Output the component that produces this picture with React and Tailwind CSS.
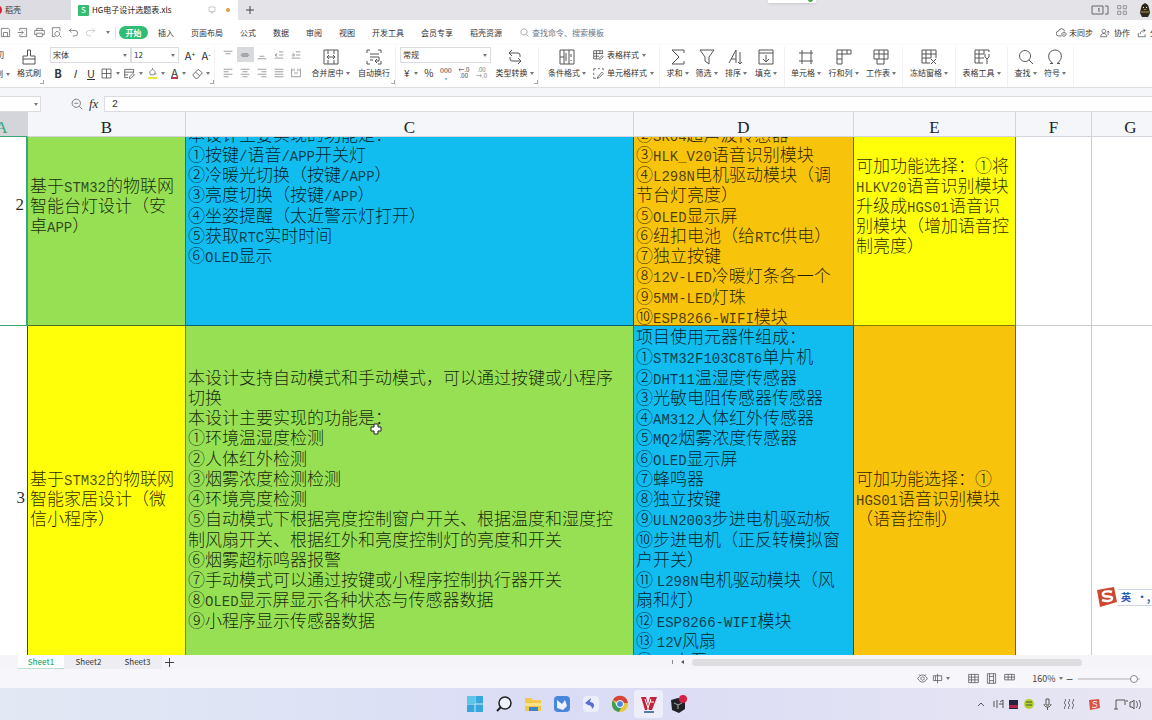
// src/App.jsx
import { Fragment } from "react";

const columns = [
  { name: "A", width: "w-[52px]" },
  { name: "B", width: "w-[158px]" },
  { name: "C", width: "w-[448px]" },
  { name: "D", width: "w-[220px]" },
  { name: "E", width: "w-[162px]" },
  { name: "F", width: "w-[76px]" },
  { name: "G", width: "w-[78px]" },
];

const rows = [
  {
    id: 2,
    height: "h-[240px]",
    selected: true,
    cells: [
      { bg: "bg-[#97e054]", lines: ["基于STM32的物联网", "智能台灯设计（安", "卓APP）"] },
      {
        bg: "bg-[#11bdef]",
        size: "h-[162px]",
        lines: [
          "本设计主要实现的功能是：",
          "①按键/语音/APP开关灯",
          "②冷暖光切换（按键/APP）",
          "③亮度切换（按键/APP）",
          "④坐姿提醒（太近警示灯打开）",
          "⑤获取RTC实时时间",
          "⑥OLED显示",
          "",
        ],
      },
      {
        bg: "bg-[#f8c40b]",
        size: "h-[243px] -my-[3px]",
        lines: [
          "项目使用元器件组成：",
          "①STM32F103C8T6单片机",
          "②SR04超声波传感器",
          "③HLK_V20语音识别模块",
          "④L298N电机驱动模块（调",
          "节台灯亮度）",
          "⑤OLED显示屏",
          "⑥纽扣电池（给RTC供电）",
          "⑦独立按键",
          "⑧12V-LED冷暖灯条各一个",
          "⑨5MM-LED灯珠",
          "⑩ESP8266-WIFI模块",
        ],
      },
      {
        bg: "bg-[#ffff0a]",
        lines: ["可加功能选择：①将", "HLKV20语音识别模块", "升级成HGS01语音识", "别模块（增加语音控", "制亮度）"],
      },
    ],
  },
  {
    id: 3,
    height: "h-[347px]",
    selected: false,
    cells: [
      { bg: "bg-[#ffff0a]", lines: ["基于STM32的物联网", "智能家居设计（微", "信小程序）"] },
      {
        bg: "bg-[#97e054]",
        size: "h-[263px]",
        lines: [
          "本设计支持自动模式和手动模式，可以通过按键或小程序",
          "切换",
          "本设计主要实现的功能是：",
          "①环境温湿度检测",
          "②人体红外检测",
          "③烟雾浓度检测检测",
          "④环境亮度检测",
          "⑤自动模式下根据亮度控制窗户开关、根据温度和湿度控",
          "制风扇开关、根据红外和亮度控制灯的亮度和开关",
          "⑥烟雾超标鸣器报警",
          "⑦手动模式可以通过按键或小程序控制执行器开关",
          "⑧OLED显示屏显示各种状态与传感器数据",
          "⑨小程序显示传感器数据",
        ],
      },
      {
        bg: "bg-[#11bdef]",
        size: "h-[344px]",
        lines: [
          "项目使用元器件组成：",
          "①STM32F103C8T6单片机",
          "②DHT11温湿度传感器",
          "③光敏电阻传感器传感器",
          "④AM312人体红外传感器",
          "⑤MQ2烟雾浓度传感器",
          "⑥OLED显示屏",
          "⑦蜂鸣器",
          "⑧独立按键",
          "⑨ULN2003步进电机驱动板",
          "⑩步进电机（正反转模拟窗",
          "户开关）",
          "⑪ L298N电机驱动模块（风",
          "扇和灯）",
          "⑫ ESP8266-WIFI模块",
          "⑬ 12V风扇",
          "⑭ 5V水泵",
        ],
      },
      { bg: "bg-[#f8c40b]", lines: ["可加功能选择：①", "HGS01语音识别模块", "（语音控制）"] },
    ],
  },
];

const icons = {
  save: "M2 2h10l2 2v10H2zM5 14V8h6v6",
  export: "M4 5V2h10v12H4v-3M1 8h8M6 5l3 3-3 3M11 5h1M11 11h1",
  print: "M4 5V2h8v3M4 11H1V5h14v6h-3M4 9h8v5H4z",
  preview: "M13 6V1H2v13h4M13 13l2 2M9 6.5a3.5 3.5 0 1 0 .1 0",
  undo: "M5 2L2 5l3 3M2 5h8a4 4 0 0 1 0 8H7",
  redo: "M11 2l3 3-3 3M14 5H6a4 4 0 0 0 0 8h3",
  search: "M7 1.5a5.5 5.5 0 1 0 .1 0M11 11l4 4",
  zoomOut: "M7 1.5a5.5 5.5 0 1 0 .1 0M11 11l4 4M4.5 7h5",
  cloud: "M8 13H4a3.5 3.5 0 0 1-.3-7A4.5 4.5 0 0 1 12.5 6M11.5 7.5a3 3 0 1 0 .1 0M10.5 10.5h2",
  person: "M6 2a3 3 0 1 0 .1 0M1 14c0-7 10-7 10 0zM13 5v6M11 7l2-2 2 2",
  share: "M2 8v6h11v-4M5 10c0-5 4-6 8-6M10 1l3 3-3 3",
  brush: "M6.5 1h3v6H14v8H2V7h4.5zM2 10h12",
  borders: "M1.5 1.5h13v13h-13zM8 1.5v13M1.5 8h13",
  tableDraw: "M6 14H1V2h13v5M1 6h13M6 10H1M8 13l5-5 2 2-5 5H8z",
  fill: "M3 7l5-5 5 5-2 5H4zM8 2V0M14 9v3",
  eraser: "M1 10l8-8 6 5-7 8H5zM5 6l6 5",
  mergeCells: "M1 1h14v14H1zM5 1v4M11 1v4M5 15v-4M11 15v-4M4 8h8M6 6L4 8l2 2M10 6l2 2-2 2",
  wrap: "M1 4V1h3M12 1h3v3M1 12v3h3M12 15h3v-3M4 5h9M4 8h9v4H9M11 10l-2 2 2 2M4 11h3",
  convert: "M5 1L2 4l3 3M2 4h9a2 2 0 0 1 2 2v2M11 15l3-3-3-3M14 12H5a2 2 0 0 1-2-2V8",
  condFormat: "M1 1h14v14H1zM5 1v14M10 1v14M7 4v8M12 5v3M12 11v1M1 8h4",
  tableStyle: "M7 13H1V1h13v5M1 5h13M5 1v12M10 1v5M1 9h8M8 13l5-5 2 2-5 4z",
  cellStyle: "M1 4V1h3M7 1h3M13 1h2v2M1 7v3M1 13v2h3M7 13l6-7 2 2-6 6-3 1z",
  sum: "M14 4V1H2l7 7-7 7h12v-3",
  filter: "M1 1h14L10 8v7l-4-3V8z",
  sort: "M1 14L8 1v13M3 10h5M12 3v12M10 13l2 2 2-2",
  fillDown: "M1 1h14v14H1zM1 4h14M8 6v7M5 10l3 3 3-3",
  cell: "M4 1v14M13 1v14M1 4h14M1 12h14",
  rowsCols: "M1 1h14v4H6v10H1zM6 1v4M11 1v4M1 5h5M1 10h5",
  worksheet: "M1 1h14v9H1zM6 1v9M11 1v9M1 5h14M4 10v5h7v-5",
  freeze: "M1 1h14v8M1 1v13h8M5 1v13M10 1v8M1 5h14M1 9h9M10 10l5 5M15 10l-5 5",
  tableTools: "M15 3V1H1v13h8M1 5h9M1 9h9M5 1v13M10 1v4M13 15V9M11 5v3l2 2 2-2V5",
  symbol: "M3 14.5h3C-1 10 1 1 8 1s9 9 2 13.5h3",
  top: "M1 2h14M4 6h8",
  middle: "M3 6h10M1 8h14M3 10h10",
  bottom: "M4 10h8M1 14h14",
  outdent: "M8 3h7M8 8h7M1 13h14M5 5L2 8l3 3M2 8h3",
  indent: "M8 3h7M8 8h7M1 13h14M3 5l3 3-3 3M1 8h4",
  left: "M1 2h14M1 6h8M1 10h14M1 14h8",
  center: "M1 2h14M4 6h8M1 10h14M4 14h8",
  right: "M1 2h14M7 6h8M1 10h14M7 14h8",
  justify: "M1 2h14M1 6h14M1 10h14M1 14h14",
  distribute: "M1 1v13h14V1M5 1v4M11 1v4M5 8h6M1 3h2M13 3h2",
  monitor: "M2 2h12v9H2zM5 14h6M8 11v3",
  eye: "M1 8c4-7 10-7 14 0-4 7-10 7-14 0zM8 5.5a2.5 2.5 0 1 0 .1 0M3 2l2 2M13 2l-2 2",
  readMode: "M2 4h12v7H2zM8 1v14M5 4v7",
  gridView: "M1 2h14v12H1zM1 6h14M1 10h14M5 2v12M10 2v12",
  pageView: "M2 1h12v14H2zM5 1v14M11 1v14M5 5h6M5 11h6",
  splitView: "M1 2h14v8H1zM6 2v8M11 2v8M1 6h14",
  apps: "M1 1h5v5H1zM10 1h5v5h-5zM1 10h5v5H1zM10 10h5v5h-5z",
};

function Icon({ name, className = "size-4" }) {
  return (
    <svg viewBox="0 0 16 16" className={`shrink-0 ${className}`} fill="none" stroke="currentColor" aria-hidden="true">
      <path d={icons[name]} />
    </svg>
  );
}

function Caret({ className = "" }) {
  return (
    <svg viewBox="0 0 4 3" className={`h-[3px] w-1 shrink-0 ${className}`} fill="#777" aria-hidden="true">
      <path d="M0 0h4L2 3z" />
    </svg>
  );
}

function TitleBar() {
  return (
    <header className="relative flex h-5 shrink-0 items-stretch bg-[#e3e3e8]">
      <button className="flex w-[71px] items-center gap-[3px] overflow-hidden bg-[#dcdce2]">
        <span className="-ml-2 size-[10px] rounded-full bg-[#d61f3a]"></span>
        <span>稻壳</span>
      </button>
      <div className="flex w-[167px] items-center bg-white pr-2 pl-[7px]">
        <span className="flex size-[11px] items-center justify-center rounded-[1px] bg-[#35bd74] text-[8px] text-white">S</span>
        <h1 className="ml-[3px] flex-1 whitespace-nowrap text-[#222]">HG电子设计选题表.xls</h1>
        <Icon name="monitor" className="size-2 text-[#999]" />
        <span className="ml-[10px] size-1 rounded-full bg-[#d9a13c]"></span>
      </div>
      <button aria-label="新建" className="w-6 text-[#444]">
        <svg viewBox="0 0 8 8" className="mx-auto size-2" stroke="currentColor">
          <path d="M4 0v8M0 4h8" />
        </svg>
      </button>
      <div className="ml-auto flex items-center gap-2 text-[#666]">
        <button aria-label="窗口">
          <svg viewBox="0 0 18 10" className="h-[10px] w-[18px]" fill="none" stroke="currentColor">
            <path d="M1 1h11v8H1zM14 1h3v8h-3M8 3v4M7 4h1" />
          </svg>
        </button>
        <button aria-label="应用">
          <Icon name="apps" className="size-[10px]" />
        </button>
        <svg viewBox="0 0 14 14" className="ml-[3px] size-[14px]" aria-label="头像">
          <path d="M2 10l1-5 1-3 3-2 3 2 1 3 1 5-2 4H4z" fill="#2c281b" />
          <path d="M5 4h1v1H5zM8 4h1v1H8z" fill="#eee" />
          <path d="M5 6h4L7 7z" fill="#d8a63a" />
          <path d="M3 8h8v2H3z" fill="#6f6234" />
        </svg>
      </div>
      {/* screen recorder handle peeking from the top edge */}
      <div className="absolute top-0 left-2/3 flex h-[3px] w-12 justify-end overflow-hidden bg-white pr-[3px] shadow">
        <span className="-mt-[3px] size-[5px] rounded-full bg-[#43a047]"></span>
      </div>
    </header>
  );
}

const menus = ["插入", "页面布局", "公式", "数据", "审阅", "视图", "开发工具", "会员专享", "稻壳资源"];

function MenuBar() {
  return (
    <nav className="flex h-[25px] shrink-0 items-center overflow-hidden bg-white whitespace-nowrap">
      <div className="flex items-center gap-[6px] text-[#555]">
        {["save", "export", "print", "preview", "undo"].map((name) => (
          <button key={name} aria-label={name}>
            <Icon name={name} className="size-[11px]" />
          </button>
        ))}
        <button aria-label="redo" className="text-[#bbb]">
          <Icon name="redo" className="size-[11px]" />
        </button>
        <button aria-label="更多" className="ml-1">
          <Caret />
        </button>
      </div>
      <span className="ml-[5px] h-3 w-px bg-[#ddd]"></span>
      <button className="ml-[3px] h-[13px] w-[29px] rounded-full bg-[#2fbd73] font-bold text-white">开始</button>
      <div className="ml-[10px] flex gap-[17px]">
        {menus.map((menu) => (
          <button key={menu}>{menu}</button>
        ))}
      </div>
      <label className="ml-[18px] flex items-center gap-[3px] text-[#666]">
        <Icon name="search" className="size-[9px]" />
        <input
          placeholder="查找命令、搜索模板"
          aria-label="查找命令、搜索模板"
          className="w-24 outline-none placeholder:text-[#6b7688]"
        />
      </label>
      <div className="ml-auto flex items-center">
        <button className="flex items-center gap-[2px]">
          <Icon name="cloud" className="size-[11px]" />
          未同步
        </button>
        <button className="ml-[7px] flex items-center gap-1">
          <Icon name="person" className="size-[10px]" />
          协作
        </button>
        <button className="ml-[7px] flex w-[15px] items-center gap-[3px] overflow-hidden">
          <Icon name="share" className="size-[10px]" />
          分享
        </button>
      </div>
    </nav>
  );
}

function BigButton({ icon, label, width, caret = true }) {
  return (
    <button className={`flex shrink-0 flex-col items-center gap-[2px] pt-[2px] ${width}`}>
      <Icon name={icon} className="size-4 text-[#555]" />
      <span className="flex items-center gap-[2px] whitespace-nowrap">
        {label}
        {caret && <Caret />}
      </span>
    </button>
  );
}

function Divider() {
  return <span className="w-px shrink-0 self-stretch bg-[#f0f0f2]"></span>;
}

// small corner mark that opens the settings of a group
function Launcher() {
  return (
    <button aria-label="更多设置" className="mb-[3px] -ml-1 size-1 shrink-0 self-end border-r border-b border-[#aaa]"></button>
  );
}

function Dropdown({ label, value, width }) {
  return (
    <label className={`relative flex h-4 items-center border border-[#dcdce0] bg-white ${width}`}>
      <select aria-label={label} className="w-full appearance-none pl-[2px] outline-none">
        <option>{value}</option>
      </select>
      <Caret className="absolute right-[3px]" />
    </label>
  );
}

function FontGroup() {
  return (
    <div className="ml-[6px] flex w-[164px] shrink-0 flex-col gap-[3px]">
      <div className="flex items-center">
        <Dropdown label="字体" value="宋体" width="w-[81px]" />
        <Dropdown label="字号" value="12" width="w-12" />
        <button aria-label="增大字号" className="ml-[5px] w-3 text-[11px]">
          A<sup className="text-[7px]">+</sup>
        </button>
        <button aria-label="减小字号" className="ml-1 w-3 text-[11px]">
          A<sup className="text-[7px]">-</sup>
        </button>
      </div>
      <div className="flex h-[14px] items-center text-[11px]">
        <button className="w-4 font-bold">B</button>
        <button className="w-[17px] italic">I</button>
        <button className="w-4 underline">U</button>
        <button aria-label="边框" className="flex w-[22px] items-center justify-center gap-1">
          <Icon name="borders" className="size-[11px]" />
          <Caret />
        </button>
        <button aria-label="绘图边框" className="flex w-[24px] items-center justify-center gap-1">
          <Icon name="tableDraw" className="size-[11px]" />
          <Caret />
        </button>
        <button aria-label="填充颜色" className="flex w-[22px] items-center justify-center gap-1">
          <span className="border-b-2 border-[#e8e83a]">
            <Icon name="fill" className="size-[9px]" />
          </span>
          <Caret />
        </button>
        <button aria-label="字体颜色" className="flex w-[23px] items-center justify-center gap-1">
          <span className="border-b-2 border-[#c8324a] leading-[9px]">A</span>
          <Caret />
        </button>
        <button aria-label="清除" className="flex w-[22px] items-center justify-center gap-[3px]">
          <Icon name="eraser" className="size-[11px]" />
          <Caret />
        </button>
      </div>
    </div>
  );
}

const alignTools = ["top", "middle", "bottom", "outdent", "indent", "left", "center", "right", "justify", "distribute"];

function AlignGroup() {
  return (
    <div className="ml-[5px] grid w-[84px] shrink-0 grid-cols-5 gap-y-[3px]">
      {alignTools.map((tool) => (
        <button
          key={tool}
          aria-label={tool}
          className={`flex h-[15px] items-center justify-center text-[#666] ${tool === "middle" ? "bg-[#d9dade]" : ""}`}
        >
          <Icon name={tool} className="size-[10px]" />
        </button>
      ))}
    </div>
  );
}

function NumberGroup() {
  return (
    <div className="ml-1 flex w-[91px] shrink-0 flex-col gap-[3px]">
      <Dropdown label="数字格式" value="常规" width="w-full" />
      <div className="flex h-[14px] items-center justify-between px-1 text-[10px]">
        <button className="flex items-center gap-1">
          ¥<Caret />
        </button>
        <button>%</button>
        <button aria-label="千位分隔" className="text-[7px] leading-[6px]">
          000
          <br />,
        </button>
        <button aria-label="增加小数位" className="text-[6px] leading-[6px]">
          ←.0
          <br />
          .00
        </button>
        <button aria-label="减少小数位" className="text-[6px] leading-[6px] text-[#777]">
          .00
          <br />
          →.0
        </button>
      </div>
    </div>
  );
}

function Ribbon() {
  return (
    <section className="flex h-[43px] shrink-0 items-start overflow-hidden border-b border-[#dedee2] bg-white pt-[2px] shadow-sm">
      <div className="flex w-[10px] shrink-0 flex-col items-end gap-[7px] overflow-hidden pt-[2px]">
        <button className="mr-[6px]">切</button>
        <button className="flex items-center gap-[3px]">
          制<Caret />
        </button>
      </div>
      <div className="w-1"></div>
      <BigButton icon="brush" label="格式刷" width="w-[30px]" caret={false} />
      <Launcher />
      <FontGroup />
      <Launcher />
      <Divider />
      <AlignGroup />
      <div className="w-1"></div>
      <BigButton icon="mergeCells" label="合并居中" width="w-[45px]" />
      <BigButton icon="wrap" label="自动换行" width="w-[42px]" caret={false} />
      <Launcher />
      <Divider />
      <NumberGroup />
      <BigButton icon="convert" label="类型转换" width="w-[47px]" />
      <Launcher />
      <Divider />
      <div className="w-[5px]"></div>
      <BigButton icon="condFormat" label="条件格式" width="w-[46px]" />
      <div className="ml-[3px] flex w-[66px] shrink-0 flex-col gap-[6px] pt-[2px] whitespace-nowrap">
        <button className="flex items-center gap-[3px]">
          <Icon name="tableStyle" className="size-[11px]" />
          表格样式
          <Caret />
        </button>
        <button className="flex items-center gap-[3px]">
          <Icon name="cellStyle" className="size-[11px]" />
          单元格样式
          <Caret />
        </button>
      </div>
      <Divider />
      <div className="w-[3px]"></div>
      <BigButton icon="sum" label="求和" width="w-[29px]" />
      <BigButton icon="filter" label="筛选" width="w-[29px]" />
      <BigButton icon="sort" label="排序" width="w-[30px]" />
      <BigButton icon="fillDown" label="填充" width="w-[30px]" />
      <div className="w-[3px]"></div>
      <Divider />
      <div className="w-[2px]"></div>
      <BigButton icon="cell" label="单元格" width="w-[38px]" />
      <BigButton icon="rowsCols" label="行和列" width="w-[37px]" />
      <BigButton icon="worksheet" label="工作表" width="w-[38px]" />
      <div className="w-[2px]"></div>
      <Divider />
      <BigButton icon="freeze" label="冻结窗格" width="w-[52px]" />
      <Divider />
      <BigButton icon="tableTools" label="表格工具" width="w-[51px]" />
      <Divider />
      <div className="w-[3px]"></div>
      <BigButton icon="search" label="查找" width="w-[29px]" />
      <BigButton icon="symbol" label="符号" width="w-[30px]" />
      <div className="w-[3px]"></div>
      <Divider />
    </section>
  );
}

function FormulaBar() {
  return (
    <div className="flex h-6 shrink-0 items-end bg-[#f5f6f9]">
      <div className="flex h-4 w-[41px] items-center justify-end border border-l-0 border-[#dcdce0] bg-white pr-[2px]">
        <Caret />
      </div>
      <button aria-label="缩小" className="mb-[2px] ml-[30px] text-[#555]">
        <Icon name="zoomOut" className="size-3" />
      </button>
      <span className="ml-[6px] w-[15px] font-['Liberation_Serif',serif] text-[13px] leading-4 italic">fx</span>
      <input
        aria-label="编辑栏"
        defaultValue="2"
        className="h-4 flex-1 border border-r-0 border-[#dcdce0] bg-white pl-[7px] font-['Liberation_Mono',monospace] text-[10px] outline-none"
      />
    </div>
  );
}

// Latin runs take half the width of a Chinese character
function CellText({ text }) {
  return text.split(/([\x21-\x7e]+)/).map((part, i) =>
    i % 2 ? (
      <span key={i} className="font-['Liberation_Mono',monospace] text-sm leading-5 text-black/70">{part}</span>
    ) : (
      <Fragment key={i}>{part}</Fragment>
    )
  );
}

function ColGroup() {
  return (
    <colgroup>
      {columns.map((col) => (
        <col key={col.name} className={col.width} />
      ))}
    </colgroup>
  );
}

function Sheet() {
  return (
    <main className="relative flex min-h-0 flex-1 flex-col overflow-hidden bg-white">
      <table className="-ml-6 w-[1194px] shrink-0 table-fixed border-separate border-spacing-0 bg-[#f5f6f9]">
        <ColGroup />
        <thead>
          <tr className="h-[25px] font-['Liberation_Serif',serif] text-[17px]">
            {columns.map((col) => (
              <th
                key={col.name}
                scope="col"
                className={`border-r border-b border-[#d3d5da] pt-[8px] leading-4 font-normal ${
                  col.name === "A" ? "border-b-[#35a878] bg-[#d4d5da] text-[#35a878]" : "text-[#222]"
                }`}
              >
                {col.name}
              </th>
            ))}
          </tr>
        </thead>
      </table>
      <div className="min-h-0 flex-1 overflow-hidden">
        <table className="-mt-[51px] -ml-6 w-[1194px] table-fixed border-separate border-spacing-0 font-['Noto_Sans_CJK_SC',sans-serif] text-[17px] leading-5 font-light text-black/85">
          <ColGroup />
          <tbody>
            {rows.map((row) => (
              <tr key={row.id} className={row.height}>
                <td
                  className={`border-b pr-[2px] pb-[2px] text-right font-['Liberation_Serif',serif] ${
                    row.selected ? "border-r-2 border-[#35a878]" : "border-r border-[#444]"
                  }`}
                >
                  {row.id}
                </td>
                {row.cells.map((cell, i) => (
                  <td key={i} className={`border-r border-b border-black/50 p-0 pb-[2px] pl-[2px] ${cell.bg}`}>
                    <div className={`flex flex-col justify-between ${cell.size || ""}`}>
                      {cell.lines.map((line, n) => (
                        <div key={n} className="h-5 whitespace-nowrap">
                          <CellText text={line} />
                        </div>
                      ))}
                    </div>
                  </td>
                ))}
                <td className="border-r border-b border-[#c8cacf]"></td>
                <td className="border-b border-[#c8cacf]"></td>
              </tr>
            ))}
          </tbody>
        </table>
      </div>

      {/* cell cursor */}
      <svg viewBox="0 0 12 12" className="absolute top-[311px] left-[370px] size-3" aria-hidden="true">
        <path d="M4 1h4v3h3v4H8v3H4V8H1V4h3z" fill="white" stroke="#222" />
      </svg>

      {/* input method bar */}
      <div className="absolute right-0 bottom-[47px] flex h-[22px] w-[56px] items-center">
        <svg viewBox="0 0 22 22" className="size-[22px] shrink-0" aria-hidden="true">
          <path d="M1 4l17-3 3 15-17 5z" fill="#cf4630" />
          <path d="M16 6c-5-2-10 0-9 3s9 0 9 3-5 4-10 2" fill="none" stroke="white" strokeWidth="2.5" />
        </svg>
        <div className="flex h-[17px] flex-1 items-center gap-[6px] border-y border-[#ccd5e6] bg-white pl-[3px] text-[10px] font-bold whitespace-nowrap text-[#2b58b8]">
          <span>英</span>
          <span>•,</span>
        </div>
      </div>
    </main>
  );
}

function SheetTabs() {
  return (
    <div className="flex h-[14px] shrink-0 items-center bg-[#f5f5f9]">
      <div className="ml-[18px] flex h-full">
        <button className="w-[46px] border-b border-[#b9dfcd] bg-white font-medium text-[#2fae78]">Sheet1</button>
        <button className="w-[49px] bg-[#eeeef2]">Sheet2</button>
        <button className="w-[49px] bg-[#eeeef2]">Sheet3</button>
      </div>
      <button aria-label="新建工作表" className="ml-[3px]">
        <svg viewBox="0 0 9 9" className="size-[9px]" stroke="#444">
          <path d="M4.5 0v9M0 4.5h9" />
        </svg>
      </button>
      <div className="ml-auto flex w-[480px] items-center gap-2">
        <span className="h-1 w-px bg-[#888]"></span>
        <svg viewBox="0 0 3 4" className="h-1 w-[3px]" fill="#555">
          <path d="M3 0v4L0 2z" />
        </svg>
        <div className="h-[7px] w-[390px] rounded-sm bg-[#dedee1]"></div>
      </div>
    </div>
  );
}

function StatusBar() {
  return (
    <footer className="flex h-[19px] shrink-0 items-center justify-end bg-[#f7f6fa] pr-[12px] text-[#444]">
      <button aria-label="护眼模式">
        <Icon name="eye" className="size-[11px]" />
      </button>
      <button aria-label="阅读模式" className="ml-1 flex items-center gap-[3px]">
        <Icon name="readMode" className="size-[11px]" />
        <Caret />
      </button>
      <div className="ml-[18px] flex gap-[7px]">
        <button aria-label="普通视图">
          <Icon name="gridView" className="size-[11px]" />
        </button>
        <button aria-label="页面布局">
          <Icon name="pageView" className="size-[11px]" />
        </button>
        <button aria-label="分页预览">
          <Icon name="splitView" className="size-[11px]" />
        </button>
      </div>
      <button className="ml-[17px] flex w-7 items-center gap-[3px] text-[9px]">
        160% <Caret />
      </button>
      <button aria-label="缩小" className="ml-[6px] text-[12px] leading-3">−</button>
      <input
        type="range"
        aria-label="显示比例"
        defaultValue="96"
        className="ml-[5px] h-3 w-[62px] appearance-none bg-transparent [&::-webkit-slider-runnable-track]:h-[2px] [&::-webkit-slider-runnable-track]:bg-[#d4d4d8] [&::-webkit-slider-thumb]:-mt-[3px] [&::-webkit-slider-thumb]:size-2 [&::-webkit-slider-thumb]:appearance-none [&::-webkit-slider-thumb]:rounded-full [&::-webkit-slider-thumb]:border [&::-webkit-slider-thumb]:border-[#888] [&::-webkit-slider-thumb]:bg-white"
      />
    </footer>
  );
}

function AppButton({ label, active, children }) {
  return (
    <button aria-label={label} className={`flex h-7 w-[29px] items-center justify-center rounded ${active ? "bg-white/50" : ""}`}>
      <svg viewBox="0 0 18 18" className="size-[18px]">
        {children}
      </svg>
    </button>
  );
}

function Tray() {
  return (
    <div className="flex items-center justify-end pr-[6px] text-[#555]">
      <svg viewBox="0 0 170 14" className="h-[14px] w-[170px]" fill="none" stroke="currentColor" aria-hidden="true">
        <path d="M2 9l3-3 3 3" />
        <path d="M18 4v6M21 3v8M24 5l3-2v8M23 7h4" />
        <path d="M33 3h9v9h-9z" fill="#272340" stroke="none" />
        <path d="M33 8h9v3h-9z" fill="#b22747" stroke="none" />
        <circle cx="53" cy="7" r="5" fill="#b6cf2d" stroke="none" />
        <path d="M50 5h6M50 8h6" stroke="#39602b" />
        <path d="M70 2h3v6h-3zM68 7c0 4 7 4 7 0M71.5 10v3" />
        <path d="M89 2c2 2-2 3 0 5s-2 3 0 5M93 2c2 2-2 3 0 5s-2 3 0 5M97 2c2 2-2 3 0 5s-2 3 0 5" />
        <path d="M113 3l10-1 1 9-10 2z" fill="#d85245" stroke="none" />
        <path d="M121 5c-4-2-6 2-2 2s2 5-3 3" stroke="white" />
        <path d="M140 12V3h9v5M142 12h-4M151 3v2" />
        <path d="M154 5h2l2-2v9l-2-2h-2zM160 4c2 2 2 5 0 7M163 3c2 3 2 6 0 9" />
      </svg>
    </div>
  );
}

function Taskbar() {
  return (
    <div className="grid h-8 shrink-0 grid-cols-[1fr_auto_1fr] items-center bg-linear-to-r from-[#e2e9f4] via-[#dadcf5] to-[#e8e6f3]">
      <span></span>
      <div className="flex">
        <AppButton label="开始">
          <path d="M1 1h16v16H1z" fill="#38a5dc" />
          <path d="M9 1v16M1 9h16" stroke="#c9ecfa" />
          <path d="M1 1h8v8H1z" fill="#5fc5e8" />
        </AppButton>
        <AppButton label="搜索">
          <circle cx="10" cy="8" r="6" fill="#eef2fa" stroke="#222" strokeWidth="1.5" />
          <path d="M6 12l-4 4" stroke="#222" strokeWidth="2" />
        </AppButton>
        <AppButton label="文件资源管理器">
          <path d="M1 3h6l2 2h8v11H1z" fill="#f2c84b" />
          <path d="M1 8h16v3H1z" fill="#fbe08a" />
          <path d="M5 12h9v4H5z" fill="#3d87c9" />
        </AppButton>
        <AppButton label="邮件">
          <rect x="1" y="1" width="16" height="16" rx="4" fill="#4a86dc" />
          <path d="M4 5l5 4 3-4 2 6-4 4-6-2z" fill="#eaf3ff" />
        </AppButton>
        <AppButton label="浏览器">
          <rect x="1" y="1" width="16" height="16" rx="4" fill="#eceefb" />
          <path d="M9 3L3 8l3 2c2 0 4 1 4 4 4-3 2-7-2-7z" fill="#5d6fd0" />
        </AppButton>
        <AppButton label="Chrome">
          <circle cx="9" cy="9" r="8" fill="#e9c63a" />
          <path d="M2 5a8 8 0 0 1 14 0l1 3H9z" fill="#d9443a" />
          <path d="M2 5a8 8 0 0 0 6 12l3-6-6-1z" fill="#3f9c55" />
          <circle cx="9" cy="9" r="3.5" fill="#4a86dc" stroke="white" />
        </AppButton>
        <AppButton label="WPS" active>
          <path d="M1 2h5l2 8 2-8h7l-5 13H9L8 12l-1 3H5z" fill="#c4223b" />
          <path d="M5 4l3 9 3-9M10 7h4" stroke="#fff" fill="none" />
          <path d="M4 17h10" stroke="#5a78a8" strokeWidth="2" />
        </AppButton>
        <AppButton label="录屏">
          <path d="M2 5l7-2 7 2v9l-6 4-7-3z" fill="#202126" />
          <path d="M5 8l4 2 4-2M9 10v4" stroke="#aaa" fill="none" />
          <circle cx="14" cy="4" r="4" fill="#d62045" />
        </AppButton>
      </div>
      <Tray />
    </div>
  );
}

export default function App() {
  return (
    <div className="flex h-screen flex-col overflow-hidden bg-white font-['Noto_Sans_CJK_SC',sans-serif] text-[8px] leading-3 text-[#333]">
      <TitleBar />
      <MenuBar />
      <Ribbon />
      <FormulaBar />
      <Sheet />
      <SheetTabs />
      <StatusBar />
      <Taskbar />
    </div>
  );
}
